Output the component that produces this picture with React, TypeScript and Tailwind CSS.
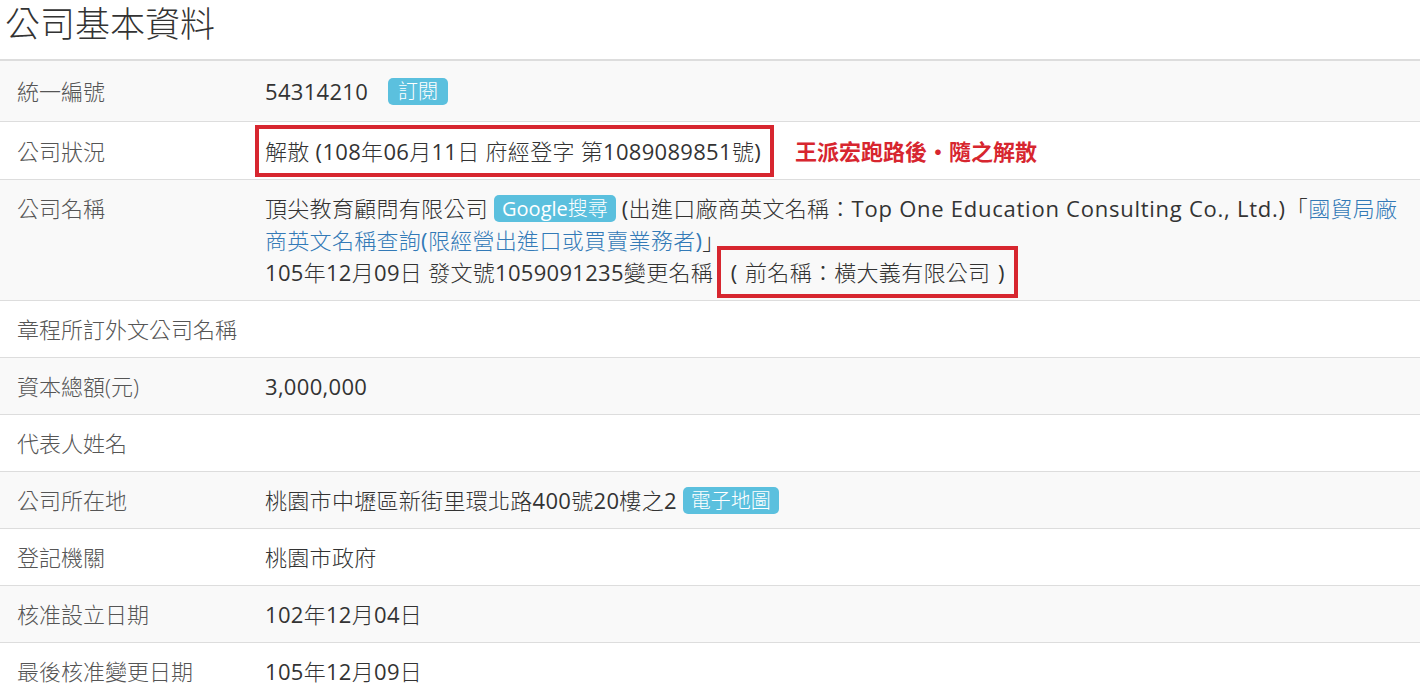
import React from "react";

const CJK = /([\u2E80-\u9FFF\uF900-\uFAFF\uFF00-\uFFEF\u300C\u300D]+)/;

const T = ({ s }: { s: string }) => {
  const parts = s.split(CJK).filter((p) => p.length > 0);
  return (
    <>
      {parts.map((p, i) =>
        CJK.test(p) ? (
          <span key={i} className="font-light">
            {p}
          </span>
        ) : (
          <React.Fragment key={i}>{p}</React.Fragment>
        )
      )}
    </>
  );
};

const Badge = ({ s, className = "" }: { s: string; className?: string }) => (
  <span
    className={`inline-block bg-[#5bc0de] text-white rounded-[5px] text-[20px] leading-[27px] px-[8px] align-[1px] tracking-normal ${className}`}
  >
    <T s={s} />
  </span>
);

const Row = ({
  label,
  children,
  striped,
  cellCls = "py-3",
  first = false,
}: {
  label: string;
  children?: React.ReactNode;
  striped: boolean;
  cellCls?: string;
  first?: boolean;
}) => (
  <tr className={striped ? "bg-[#f9f9f9]" : "bg-white"}>
    <td
      className={`${first ? "border-t-2" : "border-t"} border-[#dddddd] w-[248px] pl-[17px] pr-2 align-top text-[#555] font-light ${cellCls}`}
    >
      {label}
    </td>
    <td
      className={`${first ? "border-t-2" : "border-t"} border-[#dddddd] pl-[17px] pr-[17px] align-top tracking-[0.3px] ${cellCls}`}
    >
      {children}
    </td>
  </tr>
);

const Paren = ({ c }: { c: string }) => <span className="inline-block w-[22px] text-center">{c}</span>;

export default function App() {
  return (
    <div className="min-h-[698px] bg-white text-[#333] font-['Open_Sans','Noto_Sans_CJK_TC',sans-serif] overflow-hidden">
      <h1 className="h-[59px] pl-[5px] text-[35px] leading-[48px] font-light text-[#333]">公司基本資料</h1>
      <table className="w-full border-collapse text-[22px] leading-[32px]">
        <tbody>
          <Row label="統一編號" striped first cellCls="pt-[14px] pb-[14px]">
            54314210
            <Badge s="訂閱" className="ml-[20px] px-[10px]" />
          </Row>
          <Row label="公司狀況" striped={false} cellCls="pt-[13px] pb-[12px]">
            <span className="inline-block border-4 border-[#d7262f] -ml-[10px] pl-[6px] pr-[9px] py-[6px] -my-[10px]">
              <T s="解散 (108年06月11日 府經登字 第1089089851號)" />
            </span>
            <span className="ml-[21px] text-[#d7262f] font-bold text-[22px] tracking-normal">王派宏跑路後・隨之解散</span>
          </Row>
          <Row label="公司名稱" striped>
            <div className="whitespace-nowrap">
              <T s="頂尖教育顧問有限公司 " />
              <Badge s="Google搜尋" className="px-[7px]" /> <T s="(出進口廠商英文名稱：" />
              <span className="tracking-[0.75px]">Top One Education Consulting Co., Ltd.)</span>
              <T s="「" />
              <span className="text-[#337ab7]">
                <T s="國貿局廠" />
              </span>
            </div>
            <div className="whitespace-nowrap">
              <span className="text-[#337ab7]">
                <T s="商英文名稱查詢(限經營出進口或買賣業務者)" />
              </span>
              <T s="」" />
            </div>
            <div className="whitespace-nowrap">
              <T s="105年12月09日 發文號1059091235變更名稱" />
              <span className="inline-block border-4 border-[#d7262f] ml-[4px] px-[2px] py-[6px] -my-[10px]">
                <Paren c="(" />
                <T s="前名稱：橫大義有限公司" />
                <Paren c=")" />
              </span>
            </div>
          </Row>
          <Row label="章程所訂外文公司名稱" striped={false} />
          <Row label="資本總額(元)" striped>
            3,000,000
          </Row>
          <Row label="代表人姓名" striped={false} />
          <Row label="公司所在地" striped>
            <T s="桃園市中壢區新街里環北路400號20樓之2 " />
            <Badge s="電子地圖" className="px-[8px]" />
          </Row>
          <Row label="登記機關" striped={false}>
            <T s="桃園市政府" />
          </Row>
          <Row label="核准設立日期" striped>
            <T s="102年12月04日" />
          </Row>
          <Row label="最後核准變更日期" striped={false}>
            <T s="105年12月09日" />
          </Row>
        </tbody>
      </table>
    </div>
  );
}
